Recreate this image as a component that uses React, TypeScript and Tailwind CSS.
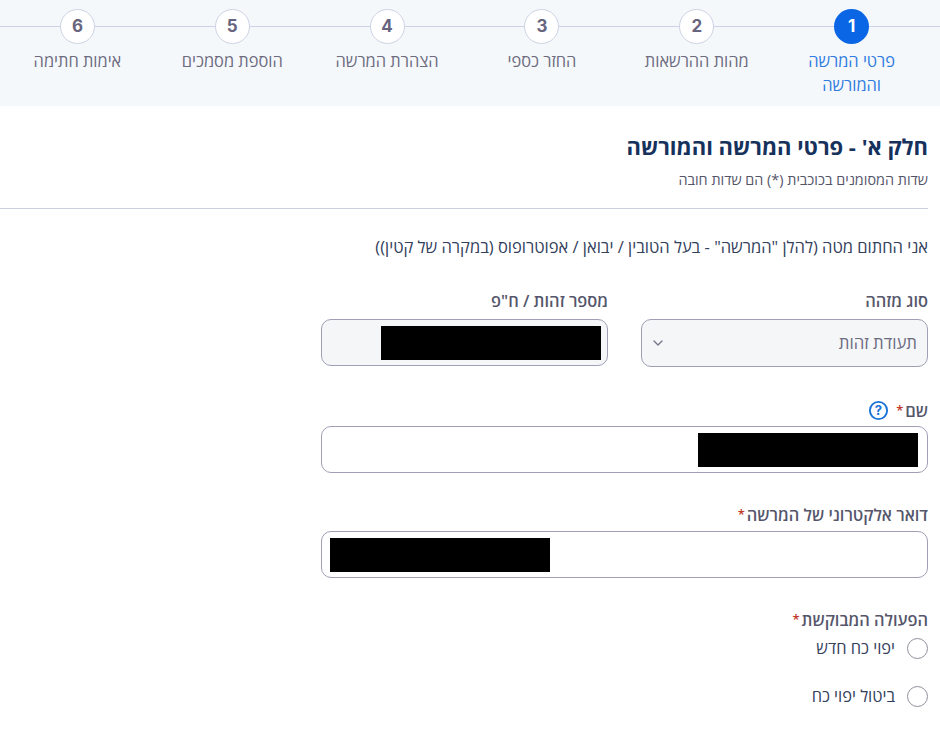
import { ChevronDown } from "lucide-react";

const steps = [
  { n: 1, t: "פרטי המרשה והמורשה", active: true },
  { n: 2, t: "מהות ההרשאות" },
  { n: 3, t: "החזר כספי" },
  { n: 4, t: "הצהרת המרשה" },
  { n: 5, t: "הוספת מסמכים" },
  { n: 6, t: "אימות חתימה" },
];

const Star = () => <span className="text-[#c0392b] font-semibold text-[13px] align-[2px] mr-[2px]">*</span>;

function Field({ children, className = "" }: { children?: React.ReactNode; className?: string }) {
  return (
    <div className={`h-[47px] rounded-[10px] border border-[#9f9fb5] bg-white flex items-center ${className}`}>
      {children}
    </div>
  );
}

const Redact = () => <div className="h-[34px] w-[220px] bg-black" />;

function Radio({ label }: { label: string }) {
  return (
    <div className="flex items-center gap-[12px] h-[22px]">
      <span className="w-[21px] h-[21px] rounded-full border border-[#8f8f9b] bg-white" />
      <span className="text-[16.4px] text-[#33415c] leading-none">{label}</span>
    </div>
  );
}

const label = "text-[16.4px] leading-[20px] font-semibold text-[#55566b]";

export default function App() {
  return (
    <div dir="rtl" className="w-[940px] h-[735px] overflow-hidden bg-white font-['Open_Sans','Liberation_Sans',sans-serif]">
      <div className="relative h-[106px] bg-[#f5f8fb] pr-[11px]">
        <div className="absolute top-[26px] inset-x-0 h-px bg-[#ccd3e4]" />
        <div className="relative grid grid-cols-6 w-[929px] pt-[9px]">
          {steps.map((s) => (
            <div key={s.n} className="flex flex-col items-center">
              <div
                className={`w-[35px] h-[35px] rounded-full flex items-center justify-center text-[17px] font-bold font-['Inter',sans-serif] ${
                  s.active ? "bg-[#0a66e4] text-white" : "bg-white border border-[#ccd3e4] text-[#67647e]"
                }`}
              >
                {s.n}
              </div>
              <div className={`mt-[5px] w-[125px] text-center text-[16.4px] leading-[24px] ${s.active ? "text-[#2f7be0]" : "text-[#6c6b7f]"}`}>
                {s.t}
              </div>
            </div>
          ))}
        </div>
      </div>

      <div className="pr-[12px]">
        <h1 className="mt-[26px] text-[22px] leading-[28px] font-bold text-[#16325c]">חלק א' - פרטי המרשה והמורשה</h1>
        <p className="mt-[11px] text-[14.4px] leading-[18px] text-[#55556a]">שדות המסומנים בכוכבית (*) הם שדות חובה</p>
        <div className="mt-[19px] h-px bg-[#ccd0dc]" />
        <p className="mt-[28px] text-[16.5px] leading-[20px] text-[#33415c]">
          אני החתום מטה (להלן "המרשה" - בעל הטובין / יבואן / אפוטרופוס (במקרה של קטין))
        </p>

        <div className="w-[607px] mt-[34px]">
          <div className="flex gap-[33px]">
            <div className="w-[287px]">
              <div className={label}>סוג מזהה</div>
              <div className="mt-[8px] h-[48px] rounded-[10px] border border-[#9f9fb5] bg-[#f5f6f8] flex items-center justify-between pr-[10px] pl-[8px]">
                <span className="text-[16.8px] text-[#6c6b7f]">תעודת זהות</span>
                <ChevronDown size={16} className="text-[#77778a]" />
              </div>
            </div>
            <div className="w-[287px]">
              <div className={label}>מספר זהות / ח"פ</div>
              <div className="mt-[8px] h-[47px] rounded-[10px] border border-[#9f9fb5] bg-[#f5f6f8] flex items-center pr-[6px]">
                <Redact />
              </div>
            </div>
          </div>

          <div className="mt-[31px] flex items-center gap-[7px] h-[24px]">
            <span className={label}>שם<Star /></span>
            <svg width="21" height="21" viewBox="0 0 21 21" fill="none">
              <circle cx="10.5" cy="10.5" r="8.6" stroke="#1a73d9" strokeWidth="1.9" />
              <text x="10.5" y="15" textAnchor="middle" fontSize="13" fontWeight="700" fill="#1a73d9" fontFamily="Inter, sans-serif">?</text>
            </svg>
          </div>
          <Field className="mt-[4px] pr-[9px]"><Redact /></Field>

          <div className={`mt-[31px] ${label}`}>דואר אלקטרוני של המרשה<Star /></div>
          <Field className="mt-[6px] justify-end pl-[8px]"><Redact /></Field>
        </div>

        <div className={`mt-[31px] ${label}`}>הפעולה המבוקשת<Star /></div>
        <div className="mt-[7px] flex flex-col gap-[26px]">
          <Radio label="יפוי כח חדש" />
          <Radio label="ביטול יפוי כח" />
        </div>
      </div>
    </div>
  );
}
